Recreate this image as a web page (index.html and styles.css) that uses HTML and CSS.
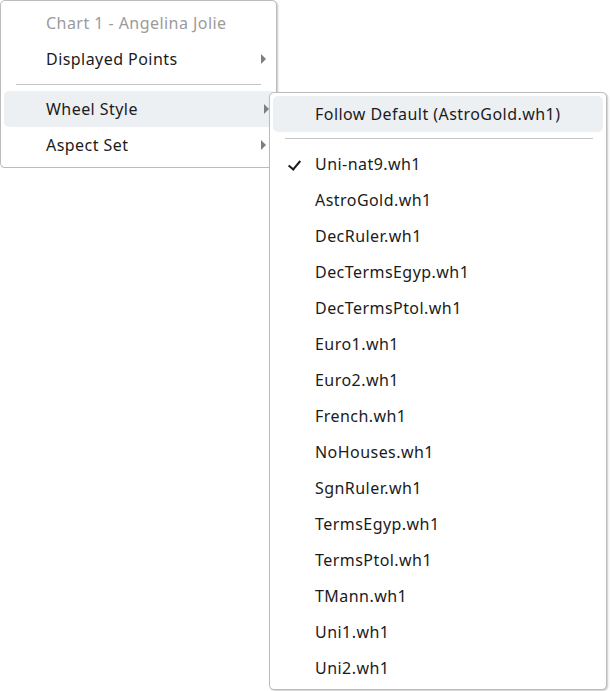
FILE: index.html
```html
<!DOCTYPE html>
<html lang="en">
<head>
<meta charset="UTF-8">
<title>Chart menu</title>
<link rel="stylesheet" href="styles.css">
</head>
<body>
    <!-- main context menu -->
    <div class="menu main-menu">
        <div class="item disabled">Chart 1 - Angelina Jolie</div>
        <div class="item has-sub">Displayed Points<span class="arrow"></span></div>
        <div class="separator"></div>
        <div class="item has-sub active">Wheel Style<span class="arrow"></span></div>
        <div class="item has-sub">Aspect Set<span class="arrow"></span></div>
    </div>

    <!-- wheel style flyout -->
    <div class="menu sub-menu">
        <div class="item active">Follow Default (AstroGold.wh1)</div>
        <div class="separator"></div>
        <div class="item checked"><span class="check"></span>Uni-nat9.wh1</div>
        <div class="item">AstroGold.wh1</div>
        <div class="item">DecRuler.wh1</div>
        <div class="item">DecTermsEgyp.wh1</div>
        <div class="item">DecTermsPtol.wh1</div>
        <div class="item">Euro1.wh1</div>
        <div class="item">Euro2.wh1</div>
        <div class="item">French.wh1</div>
        <div class="item">NoHouses.wh1</div>
        <div class="item">SgnRuler.wh1</div>
        <div class="item">TermsEgyp.wh1</div>
        <div class="item">TermsPtol.wh1</div>
        <div class="item">TMann.wh1</div>
        <div class="item">Uni1.wh1</div>
        <div class="item">Uni2.wh1</div>
    </div>
</body>
</html>
```

FILE: styles.css
```css
body, html {
    margin: 0;
    background: white;
    font-family: "Noto Sans", "Open Sans", sans-serif;
    font-size: 16px;
    letter-spacing: 0.45px;
    color: #1b1b1b;
}
.menu {
    background: white;
    border: 1px solid #bcbcbc;
    border-radius: 5px;
    box-shadow: 1px 1px 2px rgba(0, 0, 0, 0.22);
    box-sizing: border-box;
}
.main-menu {
    width: 277px;
    height: 168px;
    padding: 4px 3px 3px 3px;
}
.sub-menu {
    position: absolute;
    left: 269px;
    top: 92px;
    width: 338px;
    height: 598px;
    padding: 3px;
}
.item {
    position: relative;
    height: 36px;
    line-height: 37px;
    padding-left: 42px;
    border-radius: 5px;
    white-space: nowrap;
}
.item.active {
    background: #edf0f3;
}
.main-menu .item.active {
    margin-right: -3px;
}
.disabled {
    color: #9b9b9b;
}
.separator {
    height: 1px;
    background: #c4c4c4;
    margin: 7px 12px 6px 12px;
}
.sub-menu .separator {
    margin: 6px 10px 7px 12px;
}
.arrow {
    position: absolute;
    right: 7px;
    top: 13px;
    width: 0;
    height: 0;
    border-left: 5px solid #7f7f7f;
    border-top: 5px solid transparent;
    border-bottom: 5px solid transparent;
}
.check {
    position: absolute;
    left: 18px;
    top: 12px;
    width: 5px;
    height: 10px;
    border-right: 2px solid #1b1b1b;
    border-bottom: 2px solid #1b1b1b;
    transform: rotate(40deg);
}
```
